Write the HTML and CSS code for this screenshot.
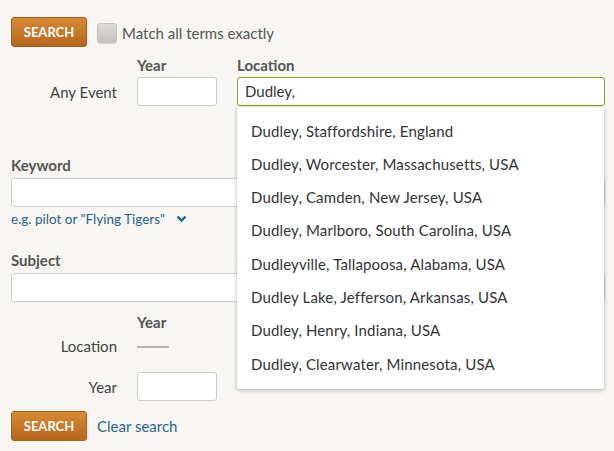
FILE: index.html
```html
<!DOCTYPE html>
<html>
<head>
<meta charset="utf-8">
<link rel="stylesheet" href="styles.css">
</head>
<body>
<div class="page">
  <div class="top-row">
    <button class="btn">SEARCH</button>
    <span class="checkbox"></span>
    <span class="check-label">Match all terms exactly</span>
  </div>

  <div class="grid event">
    <span></span>
    <span class="head">Year</span>
    <span class="head">Location</span>
    <span class="row-label">Any Event</span>
    <input class="field year" type="text">
    <div class="loc-wrap">
      <div class="field loc active">Dudley,</div>
      <ul class="dropdown">
        <li>Dudley, Staffordshire, England</li>
        <li>Dudley, Worcester, Massachusetts, USA</li>
        <li>Dudley, Camden, New Jersey, USA</li>
        <li>Dudley, Marlboro, South Carolina, USA</li>
        <li>Dudleyville, Tallapoosa, Alabama, USA</li>
        <li>Dudley Lake, Jefferson, Arkansas, USA</li>
        <li>Dudley, Henry, Indiana, USA</li>
        <li>Dudley, Clearwater, Minnesota, USA</li>
      </ul>
    </div>
  </div>

  <div class="block keyword">
    <div class="head">Keyword</div>
    <div class="field wide"></div>
    <div class="hint">e.g. pilot or "Flying Tigers" <svg class="chev" width="11" height="8" viewBox="0 0 11 8"><polyline points="1.5,1.5 5.5,5.5 9.5,1.5" fill="none" stroke="#1d6391" stroke-width="2.4"/></svg></div>
  </div>

  <div class="block subject">
    <div class="head">Subject</div>
    <div class="field wide"></div>
  </div>

  <div class="grid small loc2">
    <span></span>
    <span class="head">Year</span>
    <span class="row-label">Location</span>
    <span class="dash-cell"><span class="dash"></span></span>
  </div>

  <div class="grid small yearrow">
    <span class="row-label">Year</span>
    <div class="field year"></div>
  </div>

  <div class="bottom-row">
    <button class="btn">SEARCH</button>
    <a class="clear" href="#">Clear search</a>
  </div>
</div>
</body>
</html>
```

FILE: styles.css
```css
html, body {
  margin: 0;
  padding: 0;
  background: #f7f6f2;
}
body {
  font-family: Lato, "Source Sans Pro", "Liberation Sans", sans-serif;
  font-size: 15px;
  color: #444;
}
.page {
  padding: 17px 11px 0 11px;
}
.top-row {
  display: flex;
  align-items: center;
  height: 30px;
}
.btn {
  width: 76px;
  height: 30px;
  border: 1px solid #a85f1e;
  border-radius: 3px;
  background: linear-gradient(#d88a33, #b7661d);
  color: #fff;
  font-family: inherit;
  font-weight: bold;
  font-size: 13px;
  padding: 0;
  box-sizing: border-box;
}
.checkbox {
  width: 20px;
  height: 20px;
  margin-left: 10px;
  border-radius: 3px;
  border: 1px solid #c4c2bf;
  background: linear-gradient(#dedcd9, #c3c1be);
  box-sizing: border-box;
  box-shadow: 0 1px 1px rgba(0,0,0,0.15);
  margin-top: 2px;
}
.check-label {
  margin-left: 5px;
  color: #555;
  margin-top: 2px;
}
.head {
  font-weight: bold;
  color: #555;
  line-height: 20px;
}
.grid {
  display: grid;
  grid-template-columns: 106px 80px 368px;
  column-gap: 20px;
  align-items: center;
}
.grid.small {
  grid-template-columns: 106px 80px;
}
.event {
  margin-top: 8px;
  row-gap: 2px;
}
.row-label {
  text-align: right;
  line-height: 20px;
}
.field {
  height: 29px;
  box-sizing: border-box;
  border: 1px solid #cfcdca;
  border-radius: 3px;
  background: #fff;
}
input.field {
  width: 80px;
  padding: 0;
  font: inherit;
}
.loc-wrap {
  position: relative;
}
.loc {
  border-color: #8b9c2c;
  padding-left: 7px;
  line-height: 27px;
  color: #333;
}
.dropdown {
  position: absolute;
  left: 0;
  right: 1px;
  top: 30px;
  margin: 0;
  padding: 7.5px 0 8px;
  list-style: none;
  background: #fff;
  border-radius: 0 0 3px 3px;
  box-shadow: 0 1px 4px rgba(0,0,0,0.3);
  z-index: 5;
}
.dropdown li {
  line-height: 33.3px;
  padding-left: 14px;
  color: #333;
  letter-spacing: 0.15px;
}
.block .head {
  margin-bottom: 3px;
}
.keyword {
  margin-top: 49px;
}
.wide {
  width: 594px;
}
.hint {
  margin-top: 3px;
  font-size: 13.5px;
  line-height: 18px;
  color: #1d6391;
}
.chev {
  margin-left: 8px;
  vertical-align: 1px;
}
.subject {
  margin-top: 22px;
}
.loc2 {
  margin-top: 10px;
  row-gap: 4px;
}
.dash-cell {
  display: flex;
  align-items: center;
  height: 20px;
}
.dash {
  display: block;
  width: 32px;
  height: 2px;
  background: #b5b3b0;
  margin-top: 2px;
}
.yearrow {
  margin-top: 16px;
}
.bottom-row {
  display: flex;
  align-items: center;
  margin-top: 10px;
}
.clear {
  margin-left: 10px;
  color: #25678f;
  text-decoration: none;
}
```
